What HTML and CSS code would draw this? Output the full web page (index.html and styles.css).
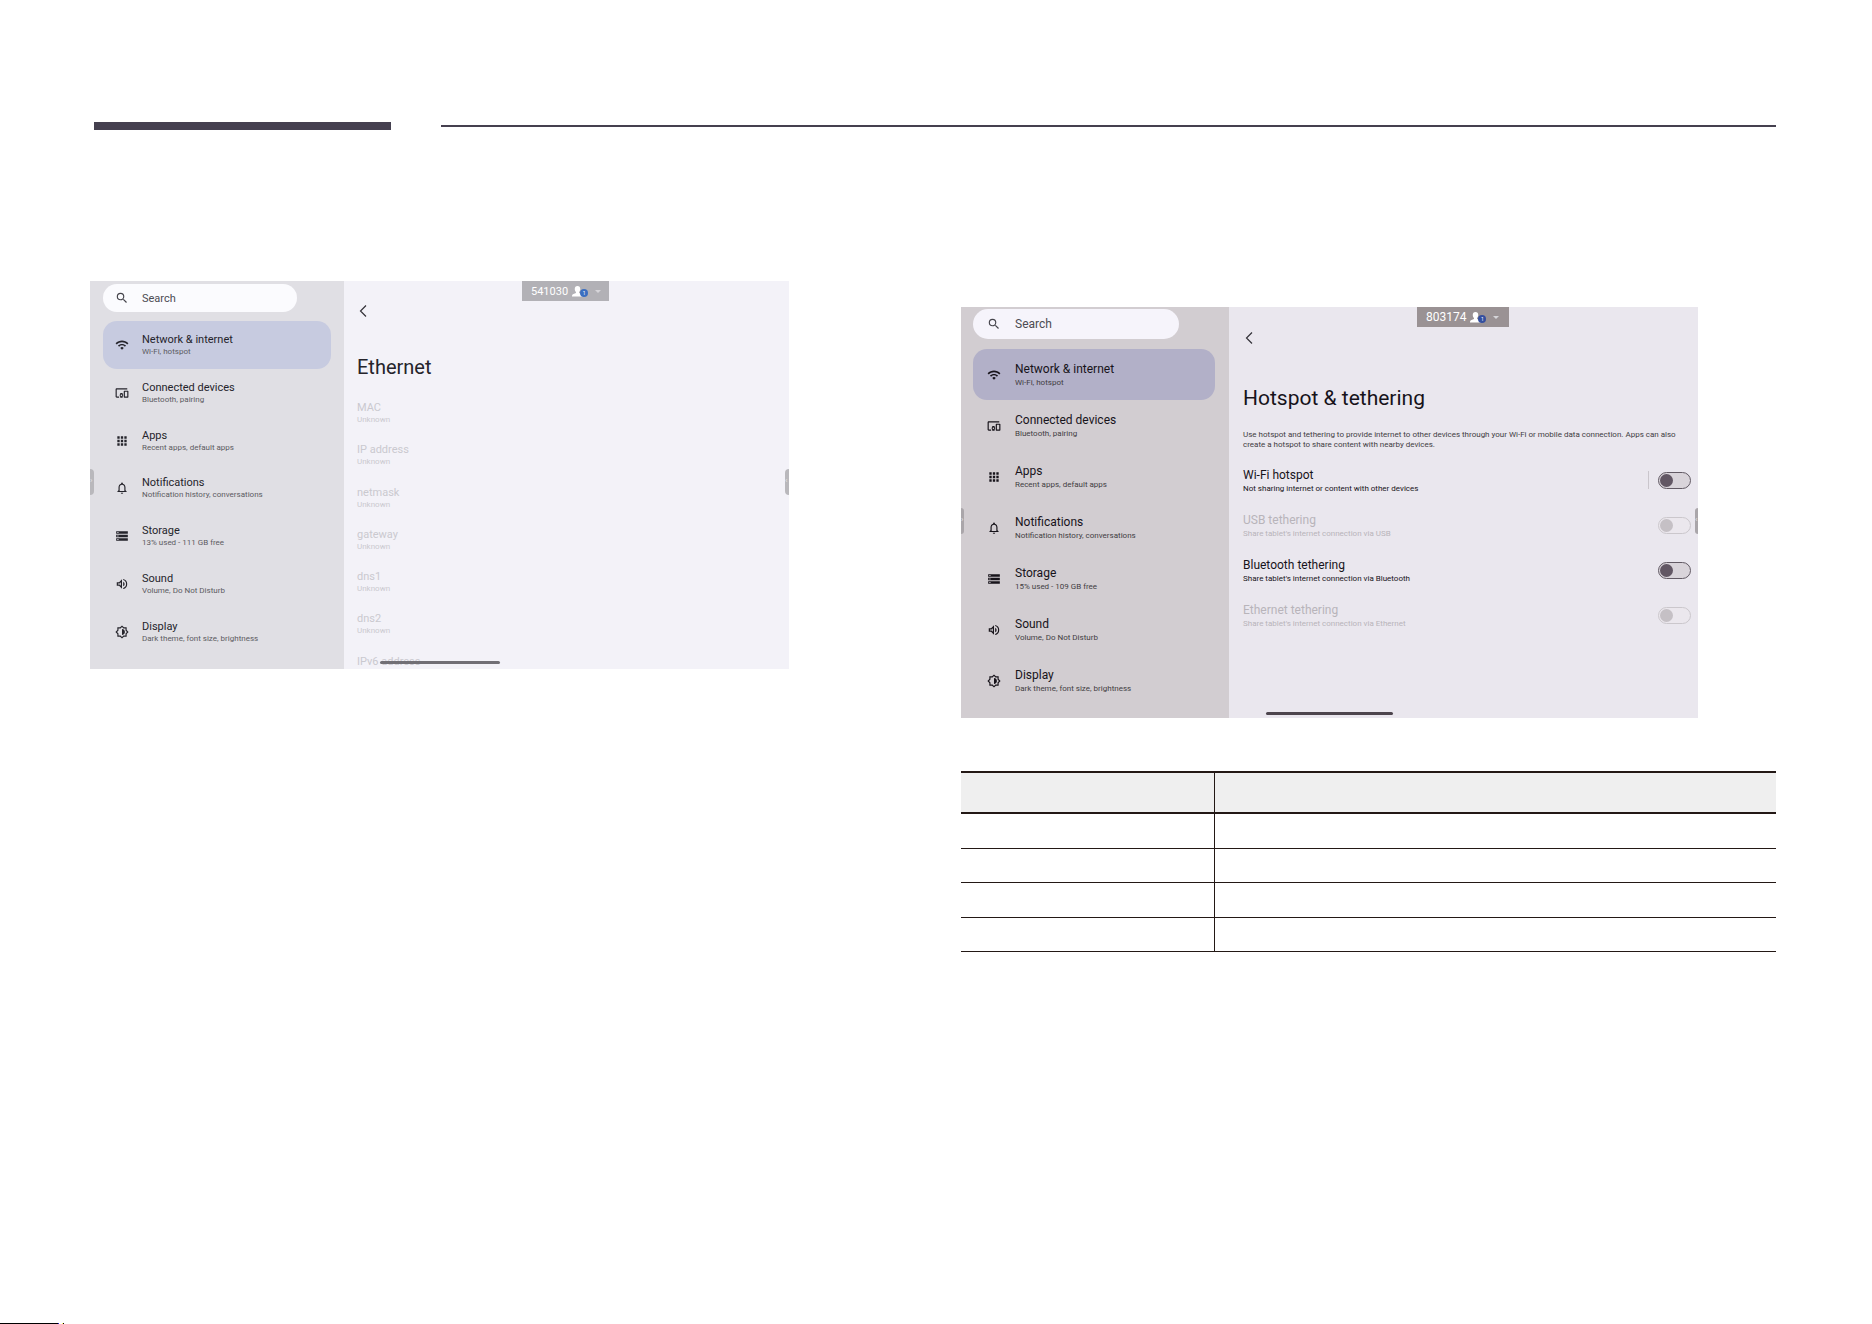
FILE: index.html
```html
<!DOCTYPE html>
<html lang="en">
<head>
  <meta charset="UTF-8" />
  <meta name="viewport" content="width=device-width, initial-scale=1.0" />
  <title>Network &amp; internet</title>
  <link rel="stylesheet" href="styles.css">
</head>
<body>
  <!-- shared icons -->
  <svg class="sprite" aria-hidden="true">
    <symbol id="i-search" viewBox="0 0 24 24"><path d="M15.5 14h-.79l-.28-.27A6.47 6.47 0 0 0 16 9.5 6.5 6.5 0 1 0 9.5 16c1.61 0 3.09-.59 4.23-1.57l.27.28v.79l5 4.99L20.49 19l-4.99-5zm-6 0a4.5 4.5 0 1 1 0-9 4.5 4.5 0 0 1 0 9z"/></symbol>
    <symbol id="i-wifi" viewBox="0 0 24 24"><path d="M1 9l2 2c4.970-4.970 13.030-4.970 18 0l2-2C16.930 2.930 7.080 2.930 1 9zm8 8l3 3 3-3a4.237 4.237 0 0 0-6 0zm-4-4l2 2a7.074 7.074 0 0 1 10 0l2-2C15.140 9.140 8.870 9.140 5 13z"/></symbol>
    <symbol id="i-devices" viewBox="0 0 24 24"><path d="M3 6h18V4H3c-1.100 0-2 .9-2 2v12c0 1.100.9 2 2 2h4v-2H3V6zm10 6H9v1.780c-.61.55-1 1.330-1 2.220s.39 1.670 1 2.220V20h4v-1.780c.61-.55 1-1.340 1-2.220s-.39-1.670-1-2.220V12zm-2 5.500c-.83 0-1.500-.67-1.500-1.500s.67-1.500 1.500-1.500 1.500.67 1.500 1.500-.67 1.500-1.500 1.500zM22 8h-6c-.5 0-1 .5-1 1v10c0 .5.5 1 1 1h6c.5 0 1-.5 1-1V9c0-.5-.5-1-1-1zm-1 10h-4v-8h4v8z"/></symbol>
    <symbol id="i-apps" viewBox="0 0 24 24"><path d="M4 8h4V4H4v4zm6 12h4v-4h-4v4zm-6 0h4v-4H4v4zm0-6h4v-4H4v4zm6 0h4v-4h-4v4zm6-10v4h4V4h-4zm-6 4h4V4h-4v4zm6 6h4v-4h-4v4zm0 6h4v-4h-4v4z"/></symbol>
    <symbol id="i-bell" viewBox="0 0 24 24"><path d="M12 22c1.100 0 2-.9 2-2h-4c0 1.100.9 2 2 2zm6-6v-5c0-3.070-1.630-5.640-4.500-6.320V4a1.500 1.500 0 0 0-3 0v.68C7.640 5.360 6 7.920 6 11v5l-2 2v1h16v-1l-2-2zm-2 1H8v-6c0-2.480 1.510-4.500 4-4.500s4 2.020 4 4.500v6z"/></symbol>
    <symbol id="i-storage" viewBox="0 0 24 24"><path d="M2 20h20v-4H2v4zm2-3h2v2H4v-2zM2 4v4h20V4H2zm4 3H4V5h2v2zm-4 7h20v-4H2v4zm2-3h2v2H4v-2z"/></symbol>
    <symbol id="i-sound" viewBox="0 0 24 24"><path d="M3 9v6h4l5 5V4L7 9H3zm7-.17v6.340L7.830 13H5v-2h2.830L10 8.830zM16.500 12A4.500 4.500 0 0 0 14 7.970v8.050A4.470 4.470 0 0 0 16.500 12zM14 3.230v2.060a7.010 7.010 0 0 1 0 13.420v2.060a9.010 9.010 0 0 0 0-17.540z"/></symbol>
    <symbol id="i-display" viewBox="0 0 24 24"><path d="M20 8.690V4h-4.690L12 .69 8.690 4H4v4.690L.69 12 4 15.310V20h4.690L12 23.310 15.310 20H20v-4.690L23.310 12 20 8.690zm-2 5.790V18h-3.520L12 20.480 9.520 18H6v-3.520L3.520 12 6 9.520V6h3.520L12 3.520 14.480 6H18v3.520L20.480 12 18 14.480zM12 7v10c2.760 0 5-2.240 5-5s-2.240-5-5-5z"/></symbol>
    <symbol id="i-back" viewBox="0 0 8 12"><path d="M7 .5 1.500 6 7 11.500" fill="none" stroke="currentColor" stroke-width="1.200"/></symbol>
    <symbol id="i-user" viewBox="0 0 12 12"><path d="M6 0c2 0 3 1.400 3 3.200 0 1.500-.6 2.600-1.300 3.300v1L11 9c.7.400 1 1 1 2v.5H0V11c0-1 .3-1.600 1-2l3.300-1.500v-1C3.600 5.800 3 4.700 3 3.200 3 1.400 4 0 6 0z"/></symbol>
  </svg>

  <header class="rule">
    <div class="rule-thick"></div>
    <div class="rule-thin"></div>
  </header>

  <main class="columns">
    <section class="shot shot-ethernet">
      <aside class="sidebar">
        <label class="search">
          <svg class="icon"><use href="#i-search"/></svg>
          <input type="text" placeholder="Search" aria-label="Search settings" />
        </label>
        <nav class="menu">
          <a class="item active" href="#"><svg class="icon"><use href="#i-wifi"/></svg><span><b>Network &amp; internet</b><small>Wi-Fi, hotspot</small></span></a>
          <a class="item" href="#"><svg class="icon"><use href="#i-devices"/></svg><span><b>Connected devices</b><small>Bluetooth, pairing</small></span></a>
          <a class="item" href="#"><svg class="icon"><use href="#i-apps"/></svg><span><b>Apps</b><small>Recent apps, default apps</small></span></a>
          <a class="item" href="#"><svg class="icon"><use href="#i-bell"/></svg><span><b>Notifications</b><small>Notification history, conversations</small></span></a>
          <a class="item" href="#"><svg class="icon"><use href="#i-storage"/></svg><span><b>Storage</b><small>13% used - 111 GB free</small></span></a>
          <a class="item" href="#"><svg class="icon"><use href="#i-sound"/></svg><span><b>Sound</b><small>Volume, Do Not Disturb</small></span></a>
          <a class="item" href="#"><svg class="icon"><use href="#i-display"/></svg><span><b>Display</b><small>Dark theme, font size, brightness</small></span></a>
        </nav>
      </aside>
      <div class="panel">
        <button class="back" aria-label="Back"><svg><use href="#i-back"/></svg></button>
        <h2>Ethernet</h2>
        <dl class="info">
          <div><dt>MAC</dt><dd>Unknown</dd></div>
          <div><dt>IP address</dt><dd>Unknown</dd></div>
          <div><dt>netmask</dt><dd>Unknown</dd></div>
          <div><dt>gateway</dt><dd>Unknown</dd></div>
          <div><dt>dns1</dt><dd>Unknown</dd></div>
          <div><dt>dns2</dt><dd>Unknown</dd></div>
          <div><dt>IPv6 address</dt></div>
        </dl>
      </div>
      <button class="code">541030 <span class="user"><svg><use href="#i-user"/></svg><i>1</i></span><span class="caret"></span></button>
      <span class="handle handle-left"></span>
      <span class="handle handle-right"></span>
      <span class="home-bar"></span>
    </section>

    <div class="right">
      <section class="shot shot-hotspot">
        <aside class="sidebar">
          <label class="search">
            <svg class="icon"><use href="#i-search"/></svg>
            <input type="text" placeholder="Search" aria-label="Search settings" />
          </label>
          <nav class="menu">
            <a class="item active" href="#"><svg class="icon"><use href="#i-wifi"/></svg><span><b>Network &amp; internet</b><small>Wi-Fi, hotspot</small></span></a>
            <a class="item" href="#"><svg class="icon"><use href="#i-devices"/></svg><span><b>Connected devices</b><small>Bluetooth, pairing</small></span></a>
            <a class="item" href="#"><svg class="icon"><use href="#i-apps"/></svg><span><b>Apps</b><small>Recent apps, default apps</small></span></a>
            <a class="item" href="#"><svg class="icon"><use href="#i-bell"/></svg><span><b>Notifications</b><small>Notification history, conversations</small></span></a>
            <a class="item" href="#"><svg class="icon"><use href="#i-storage"/></svg><span><b>Storage</b><small>15% used - 109 GB free</small></span></a>
            <a class="item" href="#"><svg class="icon"><use href="#i-sound"/></svg><span><b>Sound</b><small>Volume, Do Not Disturb</small></span></a>
            <a class="item" href="#"><svg class="icon"><use href="#i-display"/></svg><span><b>Display</b><small>Dark theme, font size, brightness</small></span></a>
          </nav>
        </aside>
        <div class="panel">
          <button class="back" aria-label="Back"><svg><use href="#i-back"/></svg></button>
          <h2>Hotspot &amp; tethering</h2>
          <p>Use hotspot and tethering to provide internet to other devices through your Wi-Fi or mobile data connection. Apps can also create a hotspot to share content with nearby devices.</p>
          <div class="toggles">
            <label class="toggle split"><span><b>Wi-Fi hotspot</b><small>Not sharing internet or content with other devices</small></span><input type="checkbox" /></label>
            <label class="toggle off"><span><b>USB tethering</b><small>Share tablet's internet connection via USB</small></span><input type="checkbox" disabled /></label>
            <label class="toggle"><span><b>Bluetooth tethering</b><small>Share tablet's internet connection via Bluetooth</small></span><input type="checkbox" /></label>
            <label class="toggle off"><span><b>Ethernet tethering</b><small>Share tablet's internet connection via Ethernet</small></span><input type="checkbox" disabled /></label>
          </div>
        </div>
        <button class="code">803174 <span class="user"><svg><use href="#i-user"/></svg><i>1</i></span><span class="caret"></span></button>
        <span class="handle handle-left"></span>
        <span class="handle handle-right"></span>
        <span class="home-bar"></span>
      </section>

      <table>
        <thead>
          <tr><th></th><th></th></tr>
        </thead>
        <tbody>
          <tr><td></td><td></td></tr>
          <tr><td></td><td></td></tr>
          <tr><td></td><td></td></tr>
          <tr><td></td><td></td></tr>
        </tbody>
      </table>
    </div>
  </main>

  <footer class="edge"><span></span><i></i><em></em><u></u></footer>
</body>
</html>
```
FILE: styles.css
```css
* {
  box-sizing: border-box;
}
body {
  margin: 0;
  min-height: 100vh;
  display: flex;
  flex-direction: column;
  background: #fff;
  font-family: Roboto, "Liberation Sans", sans-serif;
}
.sprite {
  display: none;
}
button {
  font-family: inherit;
  border: none;
  padding: 0;
  cursor: pointer;
}

/* page rule */
.rule {
  display: flex;
  align-items: center;
  gap: 50px;
  padding: 122px 96px 0 94px;
}
.rule-thick {
  width: 297px;
  height: 8px;
  background: #45404f;
}
.rule-thin {
  flex: 1;
  height: 2px;
  background: #45404f;
}
.columns {
  display: grid;
  grid-template-columns: 871fr 815fr;
  align-items: start;
  padding: 151px 96px 0 90px;
}
.right {
  padding-top: 26px;
}

/* tablet screens */
.shot {
  position: relative;
  display: flex;
  width: 100%;
  overflow: hidden;
}
.shot-ethernet {
  --text: 11px;
  --line: 14px;
  --small: 8px;
  --small-line: 10px;
  --title: 20px;
  --fg: #25242b;
  --fg-small: #5c5b62;
  --fg-off: #cac9cf;
  max-width: 699px;
  aspect-ratio: 699 / 388;
  background: #f3f2f8;
}
.shot-hotspot {
  --text: 12px;
  --line: 15px;
  --small: 8px;
  --small-line: 11px;
  --title: 21px;
  --fg: #17131a;
  --fg-small: #423d43;
  --fg-off: #b8b4ba;
  max-width: 737px;
  aspect-ratio: 737 / 411;
  background: #eae7ee;
}
.shot b,
.shot small {
  display: block;
  font-weight: 400;
}
.shot b,
.info dt {
  font-size: var(--text);
  line-height: var(--line);
}
.shot small,
.info dd {
  font-size: var(--small);
  line-height: var(--small-line);
}

.sidebar {
  flex: none;
  display: flex;
  flex-direction: column;
}
.shot-ethernet .sidebar {
  width: 254px;
  padding: 3px 13px 13px;
  background: #e0dfe4;
}
.shot-hotspot .sidebar {
  width: 268px;
  padding: 2px 14px 12px 12px;
  background: #d2cdd1;
}
.search {
  display: flex;
  align-items: center;
  width: 85%;
  height: 28px;
  margin-bottom: 9px;
  padding-left: 12px;
  border-radius: 15px;
  background: #fbfbfe;
  color: #45444b;
}
.shot-hotspot .search {
  height: 30px;
  margin-bottom: 10px;
  padding-left: 14px;
  background: #f6f4fb;
}
.search input {
  width: 100px;
  padding: 0;
  border: none;
  outline: none;
  background: none;
  font-family: inherit;
  font-size: var(--text);
}
.search input::placeholder {
  color: #4c4b52;
}
.icon {
  flex: none;
  width: 14px;
  height: 14px;
  margin-right: 13px;
  fill: currentColor;
}
.shot-hotspot .icon {
  margin-right: 14px;
}
.menu {
  flex: 1;
  display: grid;
  grid-auto-rows: 1fr;
}
.item {
  display: flex;
  align-items: center;
  padding-left: 12px;
  border-radius: 14px;
  color: var(--fg);
  text-decoration: none;
}
.item small {
  color: var(--fg-small);
}
.shot-hotspot .item {
  padding-left: 14px;
}
.shot-ethernet .active {
  background: #c7cbe0;
}
.shot-hotspot .active {
  background: #b2b0c8;
}

.panel {
  flex: 1;
  display: flex;
  flex-direction: column;
  align-items: flex-start;
  padding: 24px 0 0 13px;
  color: var(--fg);
}
.back {
  width: 14px;
  height: 12px;
  background: none;
  color: #333238;
}
.back svg {
  display: block;
  width: 8px;
  height: 12px;
  margin-left: 2px;
}
.panel h2 {
  margin: 38px 0 22px;
  font-size: var(--title);
  font-weight: 400;
  line-height: 24px;
}
.info {
  flex: none;
  display: grid;
  grid-auto-rows: 1fr;
  height: 296px;
  margin: 0;
  color: var(--fg-off);
}
.info dd {
  margin: 0;
}
.shot-hotspot .panel {
  padding: 25px 7px 0 14px;
}
.shot-hotspot h2 {
  margin: 42px 0 20px;
}
.panel p {
  margin: 0 0 18px;
  padding-right: 10px;
  color: #423d43;
  font-size: var(--small);
  line-height: 10px;
}
.toggles {
  width: 100%;
}
.toggle {
  display: flex;
  justify-content: space-between;
  align-items: flex-start;
  height: 45px;
}
.off {
  color: var(--fg-off);
}
.toggle input {
  appearance: none;
  width: 33px;
  height: 17px;
  margin: 4px 0 0;
  padding: 1px;
  border: 1px solid #625a64;
  border-radius: 9px;
  background: #d9d4da;
}
.toggle input::before {
  content: "";
  display: block;
  width: 13px;
  height: 13px;
  border-radius: 50%;
  background: #625764;
}
.toggle input:checked::before {
  margin-left: 16px;
}
.toggle input:disabled {
  border-color: #cbc7cc;
  background: #ebe7ed;
}
.toggle input:disabled::before {
  background: #c5c0c5;
}
.split span {
  flex: 1;
}
.split::after {
  content: "";
  order: 1;
  width: 1px;
  height: 18px;
  margin: 3px 9px 0 0;
  background: #cac6cc;
}
.split input {
  order: 2;
}

/* overlays on the tablet screens */
.code {
  position: absolute;
  top: 0;
  left: 432px;
  display: flex;
  align-items: center;
  width: 87px;
  height: 20px;
  padding-left: 9px;
  background: #b2b1b6;
  color: #fff;
  font-size: var(--text);
}
.shot-hotspot .code {
  left: 456px;
  width: 92px;
  background: #9a9294;
}
.user {
  display: flex;
  align-items: flex-end;
  margin-left: 4px;
}
.user svg {
  width: 11px;
  height: 11px;
  fill: #fff;
}
.user i {
  width: 8px;
  height: 8px;
  margin-left: -3px;
  border-radius: 50%;
  background: #3b6fc0;
  font-size: 5px;
  font-style: normal;
  line-height: 8px;
}
.shot-hotspot .user i {
  background: #344f9f;
}
.caret {
  margin-left: 7px;
  border: 3px solid transparent;
  border-top-color: #d6d5d9;
  border-bottom: none;
}
.handle {
  position: absolute;
  top: 201px;
  width: 3px;
  height: 26px;
  background: #aaa6aa;
  color: #e6e5e9;
  font-size: 8px;
  line-height: 24px;
}
.shot-ethernet .handle {
  top: 188px;
  width: 4px;
  background: #b9b8bc;
}
.handle-left {
  left: 0;
  border-radius: 0 4px 4px 0;
}
.handle-right {
  right: 0;
  border-radius: 4px 0 0 4px;
}
.handle-left::before {
  content: "›";
}
.handle-right::before {
  content: "‹";
}
.home-bar {
  position: absolute;
  bottom: 5px;
  left: 290px;
  width: 120px;
  height: 3px;
  border-radius: 2px;
  background: #716f75;
}
.shot-hotspot .home-bar {
  bottom: 3px;
  left: 305px;
  width: 127px;
  background: #4d454d;
}

/* table */
table {
  width: 100%;
  margin-top: 53px;
  border-spacing: 0;
  table-layout: fixed;
}
th,
td {
  padding: 0;
  border-bottom: 1px solid #231815;
}
th {
  height: 43px;
  border-top: 2px solid #231815;
  border-bottom-width: 2px;
  background: #efefef;
}
td {
  height: 34px;
}
tr:nth-child(odd) td {
  height: 35px;
}
th:first-child,
td:first-child {
  width: 254px;
  border-right: 1px solid #231815;
}

/* trim mark on the bottom edge */
.edge {
  display: flex;
  height: 1px;
  margin-top: auto;
}
.edge span {
  width: 58px;
  background: #000;
}
.edge i {
  width: 1px;
  background: #2a1fd0;
}
.edge em {
  width: 1px;
  margin-left: 3px;
  background: #ffff60;
}
.edge u {
  width: 1px;
  background: #000;
}
```
